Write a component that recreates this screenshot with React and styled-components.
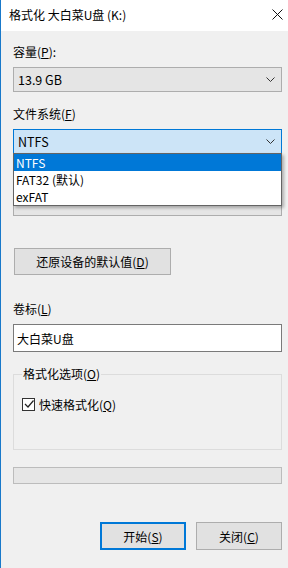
import React from "react";
import styled, { createGlobalStyle } from "styled-components";

const GlobalStyle = createGlobalStyle`
  html, body {
    margin: 0;
    padding: 0;
    background: #f0f0f0;
  }
  body {
    font-family: "Noto Sans CJK SC", "Noto Sans", sans-serif;
    font-size: 12px;
    color: #000;
  }
`;

const fileSystems = ["NTFS", "FAT32 (默认)", "exFAT"];

function Chevron() {
  return (
    <svg width="9" height="5" viewBox="0 0 9 5">
      <path d="M0.5 0.5 L4.5 4.5 L8.5 0.5" fill="none" stroke="#333" strokeWidth="1" />
    </svg>
  );
}

function FormatDialog() {
  return (
    <Window>
      <TitleBar>
        <Title>格式化 大白菜U盘 (K:)</Title>
        <CloseIcon width="11" height="11" viewBox="0 0 11 11">
          <path d="M0.5 0.5 L10.5 10.5 M10.5 0.5 L0.5 10.5" stroke="#111" strokeWidth="1" />
        </CloseIcon>
      </TitleBar>
      <Body>
        <Label>
          容量(<u>P</u>):
        </Label>
        <Select>
          <span>13.9 GB</span>
          <Chevron />
        </Select>

        <Label>
          文件系统(<u>F</u>)
        </Label>
        <SelectWrap>
          <Select focused>
            <span>NTFS</span>
            <Chevron />
          </Select>
          <DropList>
            {fileSystems.map((fs, i) => (
              <DropItem key={fs} active={i === 0}>
                <span>{fs}</span>
              </DropItem>
            ))}
          </DropList>
        </SelectWrap>

        {/* allocation unit row, hidden under the open list */}
        <Label />
        <Select>
          <span />
          <Chevron />
        </Select>

        <RestoreButton>
          还原设备的默认值(<u>D</u>)
        </RestoreButton>

        <Label>
          卷标(<u>L</u>)
        </Label>
        <TextInput>大白菜U盘</TextInput>

        <Group>
          <Legend>
            格式化选项(<u>O</u>)
          </Legend>
          <CheckRow>
            <CheckBox>
              <svg width="10" height="10" viewBox="0 0 10 10">
                <path d="M1 5 L4 8 L9.5 1.5" fill="none" stroke="#222" strokeWidth="1.2" />
              </svg>
            </CheckBox>
            <span>
              快速格式化(<u>Q</u>)
            </span>
          </CheckRow>
        </Group>

        <Progress />

        <Footer>
          <DialogButton primary>
            开始(<u>S</u>)
          </DialogButton>
          <DialogButton>
            关闭(<u>C</u>)
          </DialogButton>
        </Footer>
      </Body>
    </Window>
  );
}

const Window = styled.div`
  width: 288px;
  height: 568px;
  box-sizing: border-box;
  border-left: 1px solid #1979ca;
  background: #f0f0f0;
  display: flex;
  flex-direction: column;
  overflow: hidden;
`;

const TitleBar = styled.div`
  height: 29px;
  background: #fff;
  display: flex;
  align-items: center;
  justify-content: space-between;
  padding: 0 5px 2px 8px;
  flex-shrink: 0;
`;

const Title = styled.span`
  font-size: 12px;
  line-height: 16px;
`;

const CloseIcon = styled.svg`
  display: block;
`;

const Body = styled.div`
  padding: 12px 6px 0 12px;
  display: flex;
  flex-direction: column;
`;

const Label = styled.div`
  height: 17px;
  line-height: 17px;
  margin-bottom: 7px;
`;

const Select = styled.div`
  height: 25px;
  box-sizing: border-box;
  border: 1px solid ${(p) => (p.focused ? "#0078d7" : "#adadad")};
  background: ${(p) => (p.focused ? "#cce4f7" : "#e5e5e5")};
  display: flex;
  align-items: center;
  justify-content: space-between;
  padding: 0 6px 0 4px;
  margin-bottom: 13px;
  font-size: 12.5px;
`;

const SelectWrap = styled.div`
  position: relative;
`;

const DropList = styled.div`
  position: absolute;
  top: 24px;
  left: 0;
  right: 0;
  z-index: 2;
  background: #fff;
  border: 1px solid #646464;
  box-shadow: 2px 2px 3px rgba(0, 0, 0, 0.28);
  display: flex;
  flex-direction: column;
`;

const DropItem = styled.div`
  height: 17px;
  display: flex;
  align-items: center;
  padding-left: 2px;
  font-size: 12px;
  line-height: 1;
  background: ${(p) => (p.active ? "#0078d7" : "#fff")};
  color: ${(p) => (p.active ? "#fff" : "#000")};
`;

const RestoreButton = styled.div`
  width: 157px;
  height: 27px;
  box-sizing: border-box;
  margin: 19px 0 25px 1px;
  background: #e1e1e1;
  border: 1px solid #adadad;
  display: flex;
  align-items: center;
  justify-content: center;
`;

const TextInput = styled.div`
  height: 28px;
  box-sizing: border-box;
  border: 1px solid #7a7a7a;
  background: #fff;
  display: flex;
  align-items: center;
  padding-left: 3px;
  margin-bottom: 15px;
`;

const Group = styled.fieldset`
  margin: 0;
  height: 83px;
  box-sizing: border-box;
  border: 1px solid #dcdcdc;
  padding: 15px 8px 0 8px;
`;

const Legend = styled.legend`
  padding: 0 1px;
  margin-left: 0;
  line-height: 14px;
`;

const CheckRow = styled.div`
  display: flex;
  align-items: center;
  gap: 4px;
  height: 16px;
`;

const CheckBox = styled.span`
  width: 13px;
  height: 13px;
  box-sizing: border-box;
  border: 1px solid #333;
  background: #fff;
  display: flex;
  align-items: center;
  justify-content: center;
`;

const Progress = styled.div`
  height: 17px;
  box-sizing: border-box;
  margin-top: 17px;
  border: 1px solid #bcbcbc;
  background: #e6e6e6;
`;

const Footer = styled.div`
  display: flex;
  justify-content: flex-end;
  gap: 10px;
  margin-top: 38px;
`;

const DialogButton = styled.div`
  width: 86px;
  height: 28px;
  box-sizing: border-box;
  background: #e1e1e1;
  border: ${(p) => (p.primary ? "2px solid #0078d7" : "1px solid #adadad")};
  display: flex;
  align-items: center;
  justify-content: center;
`;

export default function App() {
  return (
    <>
      <GlobalStyle />
      <FormatDialog />
    </>
  );
}
